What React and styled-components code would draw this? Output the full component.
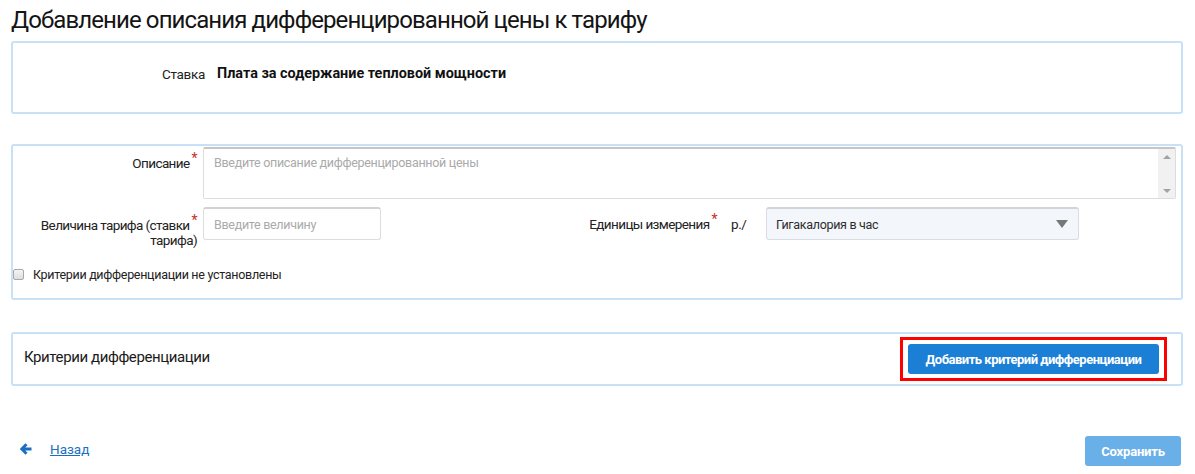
import React from 'react'
import styled, { createGlobalStyle } from 'styled-components'

const Global = createGlobalStyle`
  html, body { margin: 0; padding: 0; background: #fff; }
  body { font-family: "Roboto", "Liberation Sans", sans-serif; color: #1f1f1f; }
  * { box-sizing: border-box; }
`

export default function App() {
  return (
    <Page>
      <Global />
      <Title>Добавление описания дифференцированной цены к тарифу</Title>

      <Panel>
        <RateRow>
          <RateLabel>Ставка</RateLabel>
          <RateValue>Плата за содержание тепловой мощности</RateValue>
        </RateRow>
      </Panel>

      <Panel $gap={30}>
        <FormGrid>
          <Label $pt={9}>Описание<Req>*</Req></Label>
          <TextBox>
            <TextArea placeholder="Введите описание дифференцированной цены" />
            <ScrollTrack>
              <ScrollArrow $up />
              <ScrollArrow />
            </ScrollTrack>
          </TextBox>

          <Label $pt={11}>Величина тарифа (ставки<Req>*</Req><br />тарифа)</Label>
          <SecondRow>
            <Input placeholder="Введите величину" />
            <UnitLabel>Единицы измерения<Req>*</Req></UnitLabel>
            <Unit>р./</Unit>
            <Select>
              <span>Гигакалория в час</span>
              <Caret />
            </Select>
          </SecondRow>
        </FormGrid>
        <CheckRow>
          <CheckBox />
          <span>Критерии дифференциации не установлены</span>
        </CheckRow>
      </Panel>

      <Panel $gap={32}>
        <CriteriaRow>
          <CriteriaTitle>Критерии дифференциации</CriteriaTitle>
          <Highlight>
            <PrimaryButton>Добавить критерий дифференциации</PrimaryButton>
          </Highlight>
        </CriteriaRow>
      </Panel>

      <Footer>
        <BackLink href="#">
          <svg width="12" height="12" viewBox="0 0 12 12">
            <path d="M6.5 1.2 L1.8 6 L6.5 10.8 M2.2 6 H11.5" stroke="#1a6fc2" strokeWidth="2.8" fill="none" />
          </svg>
          <span>Назад</span>
        </BackLink>
        <SaveButton>Сохранить</SaveButton>
      </Footer>
    </Page>
  )
}

const Page = styled.div`
  width: 1195px;
  padding: 0 12px 0 11px;
`

const Title = styled.h1`
  margin: 0;
  padding: 5px 0 0 0;
  height: 41px;
  font-size: 24px;
  letter-spacing: -0.9px;
  font-weight: normal;
  color: #141414;
  line-height: 30px;
`

const Panel = styled.div`
  margin-top: ${p => p.$gap || 0}px;
  border: 2px solid #c8e1f6;
  border-radius: 3px;
  background: #fff;
`

const RateRow = styled.div`
  display: flex;
  align-items: center;
  height: 69px;
  padding-bottom: 8px;
`

const RateLabel = styled.div`
  width: 192px;
  text-align: right;
  color: #222;
  font-size: 13.5px;
  letter-spacing: -0.3px;
`

const RateValue = styled.div`
  margin-left: 12px;
  font-weight: bold;
  font-size: 14.4px;
  color: #111;
`

const FormGrid = styled.div`
  display: grid;
  grid-template-columns: 184px 1fr;
  column-gap: 6px;
  row-gap: 8px;
  padding: 1px 5px 0 0;
`

const Label = styled.div`
  text-align: right;
  color: #222;
  font-size: 13.5px;
  letter-spacing: -0.6px;
  line-height: 15px;
  padding-top: ${p => p.$pt}px;
`

const Req = styled.span`
  color: #c4302b;
  font-size: 14px;
  vertical-align: top;
  position: relative;
  top: -5px;
  margin-left: 2px;
`

const TextBox = styled.div`
  display: flex;
  height: 52px;
  border: 1px solid #ddd;
  border-top: 2px solid #c6c6c6;
  border-radius: 2px;
  overflow: hidden;
`

const TextArea = styled.textarea`
  flex: 1;
  resize: none;
  border: none;
  outline: none;
  padding: 6px 10px;
  font-family: inherit;
  font-size: 12.5px;
  letter-spacing: -0.3px;
  &::placeholder { color: #aaa; }
`

const ScrollTrack = styled.div`
  width: 17px;
  background: #f1f1f1;
  display: flex;
  flex-direction: column;
  justify-content: space-between;
  align-items: center;
  padding: 6px 0 5px;
`

const ScrollArrow = styled.span`
  width: 0;
  height: 0;
  border-left: 4px solid transparent;
  border-right: 4px solid transparent;
  ${p => p.$up ? 'border-bottom: 4px solid #a3a3a3;' : 'border-top: 4px solid #a3a3a3;'}
`

const SecondRow = styled.div`
  display: flex;
  align-items: flex-start;
`

const Input = styled.input`
  width: 178px;
  height: 33px;
  border: 1px solid #ddd;
  border-top: 2px solid #d2d2d2;
  border-radius: 3px;
  padding: 0 10px;
  font-family: inherit;
  font-size: 12.5px;
  letter-spacing: -0.3px;
  &::placeholder { color: #aaa; }
`

const UnitLabel = styled.div`
  margin-left: auto;
  padding-top: 9px;
  color: #222;
  font-size: 13.5px;
  letter-spacing: -0.6px;
`

const Unit = styled.div`
  margin-left: 14px;
  padding-top: 9px;
  width: 35px;
  color: #222;
  font-size: 13.5px;
  letter-spacing: -0.4px;
`

const Select = styled.div`
  display: flex;
  align-items: center;
  justify-content: space-between;
  width: 313px;
  height: 33px;
  margin-right: 97px;
  padding: 0 10px 0 9px;
  background: #f3f6fa;
  border: 1px solid #d8dde3;
  border-top: 2px solid #d0d4d9;
  border-radius: 3px;
  font-size: 12.5px;
  letter-spacing: -0.3px;
  color: #2e2e2e;
`

const Caret = styled.span`
  width: 0;
  height: 0;
  border-left: 6px solid transparent;
  border-right: 6px solid transparent;
  border-top: 8px solid #777;
`

const CheckRow = styled.div`
  display: flex;
  align-items: center;
  gap: 9px;
  height: 37px;
  margin-top: 13px;
  padding: 0 0 11px 0;
  font-size: 12.5px;
  letter-spacing: -0.3px;
  color: #222;
`

const CheckBox = styled.span`
  width: 11px;
  height: 11px;
  border: 1px solid #a9a9a9;
  border-radius: 2px;
  background: linear-gradient(#f4f4f4, #dedede);
`

const CriteriaRow = styled.div`
  display: flex;
  align-items: center;
  justify-content: space-between;
  height: 50px;
  padding: 0 14px 0 11px;
`

const CriteriaTitle = styled.div`
  font-size: 15px;
  letter-spacing: -0.4px;
  color: #1a1a1a;
  margin-top: -4px;
`

const Highlight = styled.div`
  border: 3px solid #f00;
  padding: 4px 5px;
`

const PrimaryButton = styled.button`
  width: 251px;
  height: 30px;
  border: none;
  border-radius: 3px;
  background: #1b7fd6;
  color: #fff;
  font-family: inherit;
  font-weight: bold;
  font-size: 13px;
  letter-spacing: -0.5px;
  white-space: nowrap;
`

const Footer = styled.div`
  display: flex;
  align-items: center;
  justify-content: space-between;
  margin-top: 50px;
  padding-left: 9px;
`

const BackLink = styled.a`
  display: flex;
  align-items: center;
  gap: 18px;
  color: #1a6fc2;
  font-size: 13.5px;
  margin-top: -4px;
  span { text-decoration: underline; }
`

const SaveButton = styled.button`
  width: 96px;
  height: 30px;
  margin-right: 2px;
  border: none;
  border-radius: 3px;
  background: #69b0e8;
  color: #fff;
  font-family: inherit;
  font-weight: bold;
  font-size: 13px;
  letter-spacing: -0.2px;
`
